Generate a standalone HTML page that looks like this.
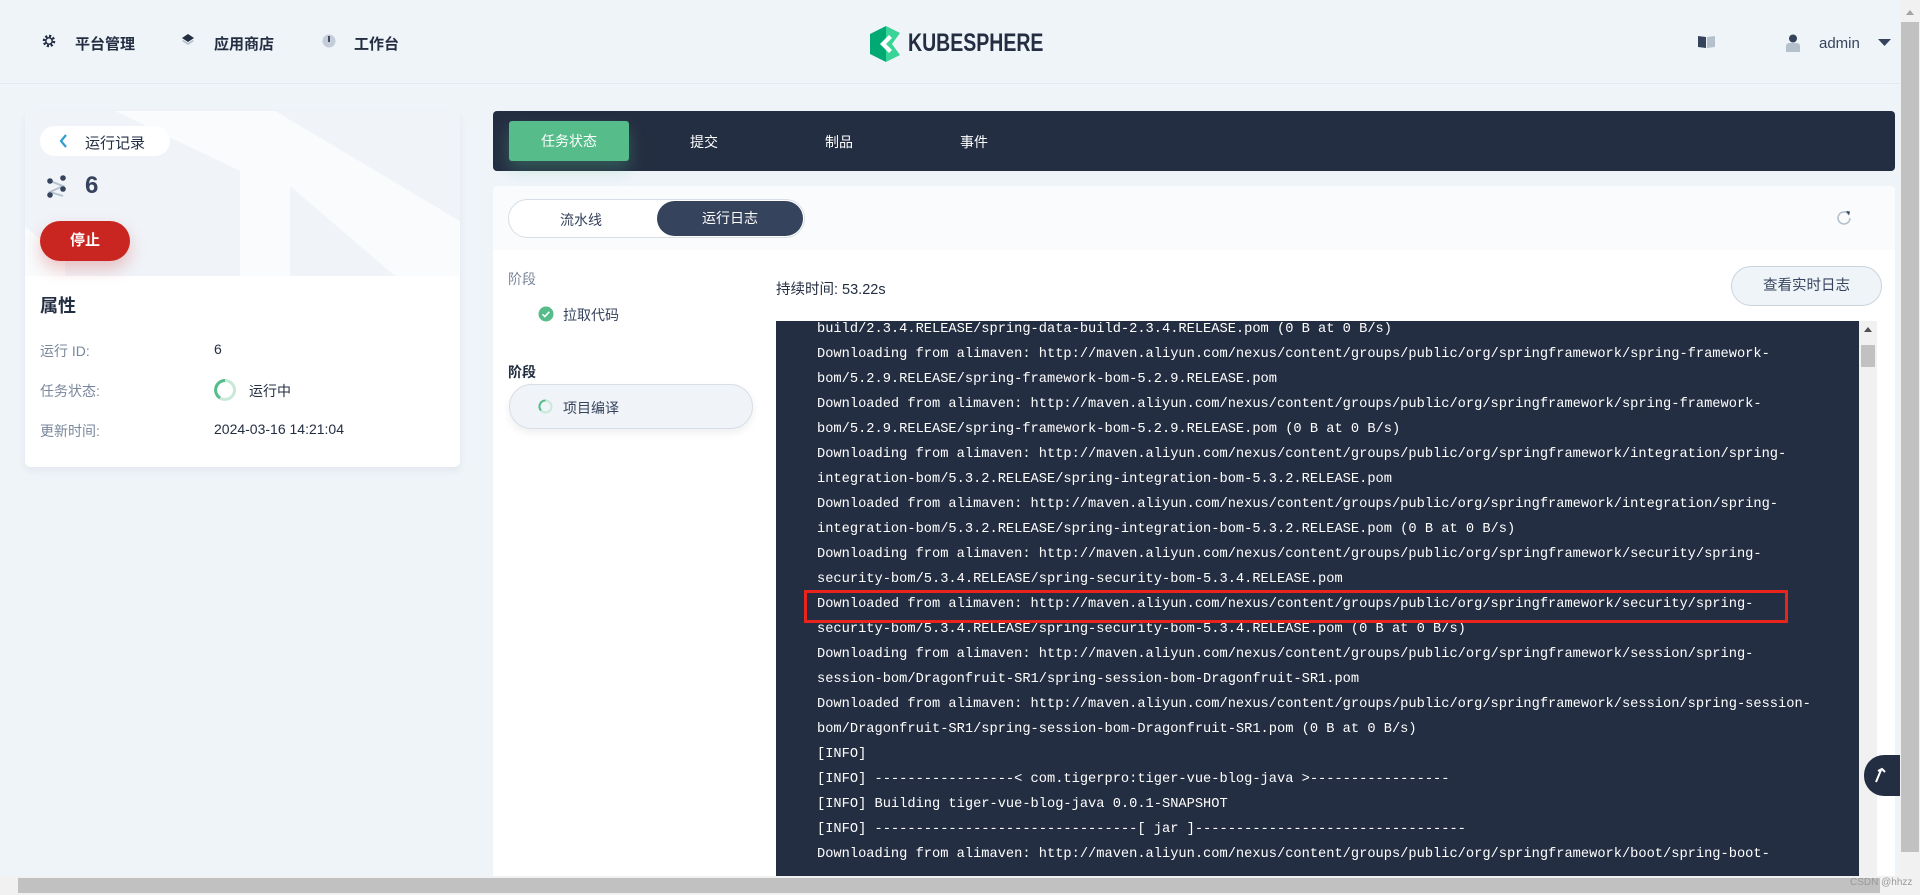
<!DOCTYPE html>
<html><head><meta charset="utf-8"><style>
*{box-sizing:border-box;margin:0;padding:0}
body{width:1920px;height:895px;overflow:hidden;background:#eff4f9;font-family:"Liberation Sans","Noto Sans CJK SC",sans-serif;color:#242e42;font-size:14px;position:relative}
.abs{position:absolute}
.nav{left:0;top:0;width:1900px;height:84px;border-bottom:1px solid #e3e9ef}
.ni{position:absolute;top:33px;font-size:15px;font-weight:bold;color:#242e42}
.card{left:25px;top:111px;width:435px;height:356px;background:#fff;border-radius:6px;box-shadow:0 4px 8px rgba(36,46,66,.06);overflow:hidden}
.chead{left:0;top:0;width:435px;height:165px;background:#f0f3f8}
.lbl{color:#79879c;font-size:14px}
.log{left:776px;top:321px;width:1083px;height:555px;background:#242e42;overflow:hidden}
.log pre{position:absolute;left:41px;top:-4px;font-family:"Liberation Mono",monospace;font-size:13.7px;line-height:25px;color:#fff}
</style></head><body>
<div class="abs nav">
 <svg class="abs" style="left:41px;top:33px" width="16" height="16" viewBox="0 0 16 16"><circle cx="8" cy="8" r="5" fill="none" stroke="#242e42" stroke-width="2.5" stroke-dasharray="2.2 1.7"/><circle cx="8" cy="8" r="3.2" fill="none" stroke="#242e42" stroke-width="1.5"/></svg>
 <div class="ni" style="left:75px">平台管理</div>
 <svg class="abs" style="left:180px;top:33px" width="16" height="16" viewBox="0 0 16 16"><path d="M8 1L14 5 8 9 2 5z" fill="#242e42"/><path d="M2 8l6 4 6-4-1.5-1L8 10 3.5 7z" fill="#b5c0cd"/></svg>
 <div class="ni" style="left:214px">应用商店</div>
 <svg class="abs" style="left:321px;top:33px" width="16" height="16" viewBox="0 0 16 16"><circle cx="8" cy="8" r="6.5" fill="#c4cdd8"/><rect x="7.2" y="3" width="1.6" height="6" fill="#242e42"/></svg>
 <div class="ni" style="left:354px">工作台</div>
 <svg class="abs" style="left:870px;top:26px" width="38" height="36" viewBox="0 0 38 36"><path d="M0 8L16 0V36L0 28z" fill="#00aa72"/><path d="M16 0L30 7 22 18 30 29 16 36z" fill="#3ad398"/><path d="M10 18L19 9 22 12 16 18 22 24 19 27z" fill="#fff"/></svg>
 <div class="abs" style="left:908px;top:29px;font-size:25px;font-weight:bold;color:#242e42;transform:scaleX(.78);transform-origin:left">KUBESPHERE</div>
 <svg class="abs" style="left:1698px;top:35px" width="18" height="14"><path d="M0 1l8 1v11l-8-1z" fill="#36435c"/><path d="M9 2l8-1v11l-8 1z" fill="#b5c0cd"/></svg>
 <svg class="abs" style="left:1786px;top:34px" width="14" height="18"><circle cx="7" cy="4.5" r="4" fill="#36435c"/><path d="M0 18v-6a3 3 0 013-3h8a3 3 0 013 3v6z" fill="#b5c0cd"/></svg>
 <div class="abs" style="left:1819px;top:35px;font-size:15px;color:#36435c">admin</div>
 <svg class="abs" style="left:1878px;top:39px" width="13" height="8"><path d="M0 0h13L6.5 7z" fill="#36435c"/></svg>
</div>

<div class="abs card">
 <div class="abs chead">
  <svg class="abs" style="left:0;top:0" width="435" height="165"><path d="M140 0H250L435 110V165H370L265 75V165H215V60L90 0z" fill="#f9fbfd"/><path d="M0 115L40 150V165H0z" fill="#f9fbfd"/></svg>
 </div>
 <div class="abs" style="left:15px;top:15px;width:130px;height:30px;background:#fff;border-radius:15px"></div>
 <svg class="abs" style="left:33px;top:22px" width="10" height="16"><path d="M8 2L3 8l5 6" fill="none" stroke="#329dce" stroke-width="2.2"/></svg>
 <div class="abs" style="left:60px;top:21px;font-size:15px">运行记录</div>
 <svg class="abs" style="left:21px;top:64px" width="22" height="24"><path d="M4 6L17 11 4 17 17 21" fill="none" stroke="#b5c0cd" stroke-width="1.8"/><circle cx="4" cy="6" r="2.8" fill="#36435c"/><circle cx="17" cy="3" r="2.8" fill="#36435c"/><circle cx="17" cy="14" r="2.8" fill="#36435c"/><circle cx="4" cy="20" r="2.8" fill="#36435c"/></svg>
 <div class="abs" style="left:60px;top:61px;font-size:24px;font-weight:bold;color:#36435c">6</div>
 <div class="abs" style="left:15px;top:110px;width:90px;height:40px;border-radius:20px;background:#ca2621;color:#fff;font-weight:bold;font-size:15px;text-align:center;line-height:40px;box-shadow:0 8px 16px rgba(202,38,33,.25)">停止</div>
 <div class="abs" style="left:15px;top:181px;font-size:18px;font-weight:bold">属性</div>
 <div class="abs lbl" style="left:15px;top:230px">运行 ID:</div><div class="abs" style="left:189px;top:230px">6</div>
 <div class="abs lbl" style="left:15px;top:270px">任务状态:</div>
 <svg class="abs" style="left:188px;top:267px" width="24" height="24"><circle cx="12" cy="12" r="9.5" fill="none" stroke="#c7e9d8" stroke-width="3"/><path d="M12 2.5A9.5 9.5 0 0 0 7 20" fill="none" stroke="#55bc8a" stroke-width="3"/></svg>
 <div class="abs" style="left:224px;top:270px">运行中</div>
 <div class="abs lbl" style="left:15px;top:310px">更新时间:</div><div class="abs" style="left:189px;top:310px">2024-03-16 14:21:04</div>
</div>

<div class="abs" style="left:493px;top:111px;width:1402px;height:60px;background:#242e42;border-radius:4px"></div>
<div class="abs" style="left:509px;top:121px;width:120px;height:40px;background:#55bc8a;border-radius:3px;color:#fff;text-align:center;line-height:40px;font-size:14px;box-shadow:0 8px 16px rgba(85,188,138,.3)">任务状态</div>
<div class="abs" style="left:690px;top:132px;color:#fff">提交</div>
<div class="abs" style="left:825px;top:132px;color:#fff">制品</div>
<div class="abs" style="left:960px;top:132px;color:#fff">事件</div>

<div class="abs" style="left:493px;top:186px;width:1402px;height:64px;background:#f9fbfd;border-radius:4px 4px 0 0"></div>
<div class="abs" style="left:508px;top:199px;width:297px;height:39px;border:1px solid #d8dee5;border-radius:20px;background:#fff"></div>
<div class="abs" style="left:560px;top:210px;color:#36435c">流水线</div>
<div class="abs" style="left:657px;top:201px;width:146px;height:35px;border-radius:18px;background:#36435c;color:#fff;text-align:center;line-height:35px">运行日志</div>
<svg class="abs" style="left:1836px;top:209px" width="16" height="16"><path d="M12.5 5A6 6 0 1 0 14 9" fill="none" stroke="#b5c0cd" stroke-width="1.6"/><path d="M10 2l4 0.5-1 4z" fill="#36435c"/></svg>
<div class="abs" style="left:493px;top:250px;width:1402px;height:645px;background:#fff"></div>
<div class="abs" style="left:508px;top:269px;color:#79879c">阶段</div>
<svg class="abs" style="left:538px;top:306px" width="16" height="16"><circle cx="8" cy="8" r="7.5" fill="#55bc8a"/><path d="M4.5 8.3l2.3 2.3 4.5-4.8" fill="none" stroke="#fff" stroke-width="1.6"/></svg>
<div class="abs" style="left:563px;top:305px;color:#36435c">拉取代码</div>
<div class="abs" style="left:508px;top:362px;font-weight:bold">阶段</div>
<div class="abs" style="left:509px;top:384px;width:244px;height:45px;border:1px solid #d8dee5;border-radius:23px;background:#f0f4f9;box-shadow:0 4px 8px rgba(36,46,66,.08)"></div>
<svg class="abs" style="left:538px;top:399px" width="15" height="15"><circle cx="7.5" cy="7.5" r="6" fill="none" stroke="#c7e9d8" stroke-width="2"/><path d="M7.5 1.5A6 6 0 0 0 3 11.5" fill="none" stroke="#55bc8a" stroke-width="2"/></svg>
<div class="abs" style="left:563px;top:398px;color:#36435c">项目编译</div>
<div class="abs" style="left:776px;top:278px;font-size:14.5px">持续时间: 53.22s</div>
<div class="abs" style="left:1731px;top:266px;width:151px;height:40px;border:1px solid #ccd3db;border-radius:20px;background:#eff4f9;text-align:center;line-height:38px;font-size:14.5px;color:#36435c">查看实时日志</div>

<div class="abs log"><pre>build/2.3.4.RELEASE/spring-data-build-2.3.4.RELEASE.pom (0 B at 0 B/s)
Downloading from alimaven: http://maven.aliyun.com/nexus/content/groups/public/org/springframework/spring-framework-
bom/5.2.9.RELEASE/spring-framework-bom-5.2.9.RELEASE.pom
Downloaded from alimaven: http://maven.aliyun.com/nexus/content/groups/public/org/springframework/spring-framework-
bom/5.2.9.RELEASE/spring-framework-bom-5.2.9.RELEASE.pom (0 B at 0 B/s)
Downloading from alimaven: http://maven.aliyun.com/nexus/content/groups/public/org/springframework/integration/spring-
integration-bom/5.3.2.RELEASE/spring-integration-bom-5.3.2.RELEASE.pom
Downloaded from alimaven: http://maven.aliyun.com/nexus/content/groups/public/org/springframework/integration/spring-
integration-bom/5.3.2.RELEASE/spring-integration-bom-5.3.2.RELEASE.pom (0 B at 0 B/s)
Downloading from alimaven: http://maven.aliyun.com/nexus/content/groups/public/org/springframework/security/spring-
security-bom/5.3.4.RELEASE/spring-security-bom-5.3.4.RELEASE.pom
Downloaded from alimaven: http://maven.aliyun.com/nexus/content/groups/public/org/springframework/security/spring-
security-bom/5.3.4.RELEASE/spring-security-bom-5.3.4.RELEASE.pom (0 B at 0 B/s)
Downloading from alimaven: http://maven.aliyun.com/nexus/content/groups/public/org/springframework/session/spring-
session-bom/Dragonfruit-SR1/spring-session-bom-Dragonfruit-SR1.pom
Downloaded from alimaven: http://maven.aliyun.com/nexus/content/groups/public/org/springframework/session/spring-session-
bom/Dragonfruit-SR1/spring-session-bom-Dragonfruit-SR1.pom (0 B at 0 B/s)
[INFO]
[INFO] -----------------&lt; com.tigerpro:tiger-vue-blog-java &gt;-----------------
[INFO] Building tiger-vue-blog-java 0.0.1-SNAPSHOT
[INFO] --------------------------------[ jar ]---------------------------------
Downloading from alimaven: http://maven.aliyun.com/nexus/content/groups/public/org/springframework/boot/spring-boot-</pre></div>
<div class="abs" style="left:804px;top:590px;width:984px;height:33px;border:3px solid #e8241c"></div>
<div class="abs" style="left:1859px;top:321px;width:18px;height:555px;background:#f1f1f1"></div>
<svg class="abs" style="left:1863px;top:325px" width="10" height="8"><path d="M1 7L5 2 9 7z" fill="#505050"/></svg>
<div class="abs" style="left:1861px;top:345px;width:14px;height:22px;background:#c1c1c1"></div>
<div class="abs" style="left:1864px;top:755px;width:36px;height:41px;background:#242e42;border-radius:20px 0 0 20px"></div>
<svg class="abs" style="left:1872px;top:766px" width="16" height="18"><path d="M4 16L9 4M6 5l4-2 3 3" fill="none" stroke="#fff" stroke-width="2"/></svg>
<div class="abs" style="left:1900px;top:0;width:20px;height:876px;background:#f1f1f1"></div>
<svg class="abs" style="left:1905px;top:8px" width="10" height="8"><path d="M1 7L5 2 9 7z" fill="#a3a3a3"/></svg>
<div class="abs" style="left:1901px;top:22px;width:18px;height:830px;background:#c1c1c1"></div>
<div class="abs" style="left:0;top:876px;width:1920px;height:19px;background:#f1f1f1"></div>
<div class="abs" style="left:18px;top:878px;width:1862px;height:15px;background:#c1c1c1"></div>
<div class="abs" style="left:1850px;top:877px;font-size:10px;color:#999">CSDN @hhzz</div>
</body></html>
